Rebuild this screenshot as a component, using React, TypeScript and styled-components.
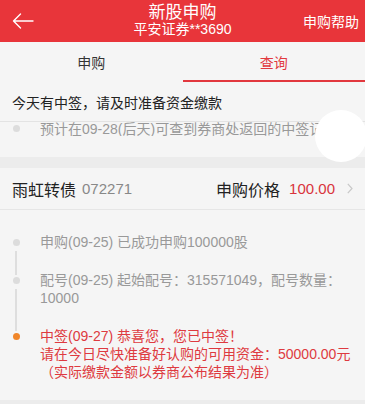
import React from "react";
import styled, { createGlobalStyle } from "styled-components";

const GlobalStyle = createGlobalStyle`
  html, body {
    margin: 0;
    padding: 0;
    background: #f5f5f5;
  }
  body {
    font-family: "Liberation Sans", "Noto Sans CJK SC", sans-serif;
    -webkit-font-smoothing: antialiased;
  }
`;

const Page = styled.div`
  width: 365px;
  height: 404px;
  overflow: hidden;
  position: relative;
  background: #f5f5f5;
`;

const Header = styled.header`
  height: 42px;
  background: #e8353a;
  color: #fff;
  display: grid;
  grid-template-columns: 80px 1fr 80px;
  align-items: center;
`;

const BackButton = styled.div`
  padding-left: 12px;
  display: flex;
  align-items: center;
  height: 100%;
`;

const TitleBlock = styled.div`
  display: flex;
  flex-direction: column;
  align-items: center;
  line-height: 17px;
`;

const Title = styled.div`
  font-size: 17px;
`;

const Subtitle = styled.div`
  font-size: 14px;
`;

const HelpLink = styled.div`
  font-size: 14px;
  text-align: right;
  padding-right: 6px;
  white-space: nowrap;
`;

const Tabs = styled.nav`
  height: 40px;
  display: flex;
  background: #f5f5f5;
`;

const Tab = styled.div<{ $active?: boolean }>`
  flex: 1;
  display: flex;
  align-items: center;
  justify-content: center;
  font-size: 14px;
  color: ${(p) => (p.$active ? "#e2383e" : "#333")};
  border-bottom: 2px solid ${(p) => (p.$active ? "#e2383e" : "transparent")};
  box-sizing: border-box;
  padding-top: 2px;
`;

const Notice = styled.section`
  position: relative;
  height: 75px;
`;

const NoticeTitle = styled.div`
  height: 40px;
  display: flex;
  align-items: center;
  padding-left: 12px;
  font-size: 14px;
  color: #222;
  border-bottom: 1px solid #e3e3e3;
  box-sizing: border-box;
`;

const TouchRipple = styled.div`
  position: absolute;
  right: -2px;
  top: 28px;
  width: 52px;
  height: 52px;
  border-radius: 50%;
  background: #fff;
`;

const Gap = styled.div`
  height: 11px;
  background: #ececec;
`;

const Card = styled.section`
  height: 232px;
  border-bottom: 4px solid #ececec;
`;

const CardHead = styled.div`
  height: 41px;
  display: flex;
  align-items: center;
  padding: 0 12px;
  border-bottom: 1px solid #e6e6e6;
`;

const BondName = styled.span`
  font-size: 16px;
  color: #222;
`;

const BondCode = styled.span`
  font-size: 15px;
  color: #888;
  margin-left: 6px;
`;

const PriceLabel = styled.span`
  margin-left: auto;
  font-size: 16px;
  color: #222;
`;

const Price = styled.span`
  font-size: 15px;
  color: #d9343c;
  margin-left: 9px;
`;

const Chevron = styled.span`
  margin-left: 12px;
  display: flex;
`;

const Timeline = styled.div<{ $top: number }>`
  padding-top: ${(p) => p.$top}px;
`;

const Item = styled.div`
  display: flex;
`;

const Rail = styled.div`
  width: 32px;
  display: flex;
  flex-direction: column;
  align-items: center;
`;

const Dot = styled.div<{ $color: string; $size: number; $offset: number }>`
  width: ${(p) => p.$size}px;
  height: ${(p) => p.$size}px;
  border-radius: 50%;
  background: ${(p) => p.$color};
  margin-top: ${(p) => p.$offset}px;
  flex: none;
`;

const RailLine = styled.div`
  flex: 1;
  width: 2px;
  background: #dedede;
  margin-top: 5px;
  margin-bottom: -4px;
`;

const ItemText = styled.div<{
  $red?: boolean;
  $lh: number;
  $nowrap?: boolean;
  $last?: boolean;
}>`
  margin-left: 8px;
  flex: 1;
  font-size: 14px;
  line-height: ${(p) => p.$lh}px;
  color: ${(p) => (p.$red ? "#de3a40" : "#999")};
  padding-right: 12px;
  padding-bottom: ${(p) => (p.$last ? 0 : 20)}px;
  white-space: ${(p) => (p.$nowrap ? "nowrap" : "normal")};
  overflow: hidden;
`;

const BackArrow = () => (
  <svg width="22" height="16" viewBox="0 0 22 16" fill="none">
    <path
      d="M21 8H1.5M8.5 1L1.5 8l7 7"
      stroke="#fff"
      strokeWidth="1.4"
      strokeLinecap="round"
      strokeLinejoin="round"
    />
  </svg>
);

const ChevronIcon = () => (
  <svg width="6" height="11" viewBox="0 0 6 11" fill="none">
    <path d="M0.8 0.8L5 5.5L0.8 10.2" stroke="#c8c8c8" strokeWidth="1.2" />
  </svg>
);

type Step = { text: React.ReactNode; dot: string; red?: boolean };

const steps: Step[] = [
  { text: "申购(09-25) 已成功申购100000股", dot: "#dcdcdc" },
  { text: "配号(09-25) 起始配号：315571049，配号数量：10000", dot: "#dcdcdc" },
  {
    text: (
      <>
        中签(09-27) 恭喜您，您已中签！
        <br />
        请在今日尽快准备好认购的可用资金：50000.00元
        <br />
        （实际缴款金额以券商公布结果为准）
      </>
    ),
    dot: "#f0862a",
    red: true,
  },
];

export default function App() {
  return (
    <Page>
      <GlobalStyle />
      <Header>
        <BackButton>
          <BackArrow />
        </BackButton>
        <TitleBlock>
          <Title>新股申购</Title>
          <Subtitle>平安证券**3690</Subtitle>
        </TitleBlock>
        <HelpLink>申购帮助</HelpLink>
      </Header>

      <Tabs>
        <Tab>申购</Tab>
        <Tab $active>查询</Tab>
      </Tabs>

      <Notice>
        <NoticeTitle>今天有中签，请及时准备资金缴款</NoticeTitle>
        <Item>
          <Rail>
            <Dot $color="#dcdcdc" $size={7} $offset={3} />
          </Rail>
          <ItemText $lh={14} $nowrap $last>
            预计在09-28(后天)可查到券商处返回的中签记录
          </ItemText>
        </Item>
        <TouchRipple />
      </Notice>

      <Gap />

      <Card>
        <CardHead>
          <BondName>雨虹转债</BondName>
          <BondCode>072271</BondCode>
          <PriceLabel>申购价格</PriceLabel>
          <Price>100.00</Price>
          <Chevron>
            <ChevronIcon />
          </Chevron>
        </CardHead>
        <Timeline $top={23}>
          {steps.map((s, i) => {
            const last = i === steps.length - 1;
            return (
              <Item key={i}>
                <Rail>
                  <Dot $color={s.dot} $size={7} $offset={6} />
                  {!last && <RailLine />}
                </Rail>
                <ItemText $red={s.red} $lh={18} $last={last}>
                  {s.text}
                </ItemText>
              </Item>
            );
          })}
        </Timeline>
      </Card>
    </Page>
  );
}
